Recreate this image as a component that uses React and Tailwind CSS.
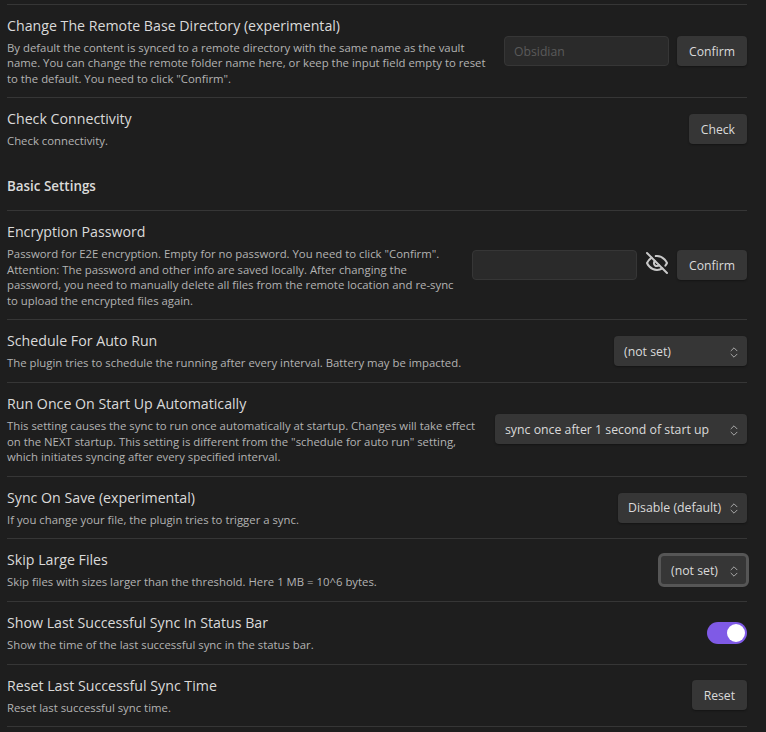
const FONT = "font-['Open_Sans','Noto_Sans',sans-serif]";

const Chevrons = () => (
    <svg width="8" height="11" viewBox="0 0 8 11" fill="none" stroke="#a8a8a8" strokeWidth="1" strokeLinecap="round" strokeLinejoin="round" className="shrink-0">
        <polyline points="1,3.8 4,0.8 7,3.8" />
        <polyline points="1,7.2 4,10.2 7,7.2" />
    </svg>
);

const EyeOff = () => (
    <svg width="24" height="24" viewBox="0 0 24 24" fill="none" stroke="#c8c8c8" strokeWidth="2" strokeLinecap="round" strokeLinejoin="round" className="shrink-0 mb-[4px]">
        <path d="M9.88 9.88a3 3 0 1 0 4.24 4.24" />
        <path d="M10.73 5.08A10.43 10.43 0 0 1 12 5c7 0 10 7 10 7a13.16 13.16 0 0 1-1.67 2.68" />
        <path d="M6.61 6.61A13.526 13.526 0 0 0 2 12s3 7 10 7a9.74 9.74 0 0 0 5.39-1.61" />
        <line x1="2" y1="2" x2="22" y2="22" />
    </svg>
);

const Button = ({ children }) => (
    <button type="button" className="h-[30px] px-[12px] pt-[2px] rounded-[4px] bg-[#363636] text-[#dadada] text-[12.2px] shadow-[0_1px_2px_rgba(0,0,0,0.35)] shrink-0">
        {children}
    </button>
);

const Input = ({ placeholder }) => (
    <input
        type="text"
        placeholder={placeholder}
        className="w-[165px] h-[30px] px-[9px] pt-[2px] rounded-[4px] bg-[#2a2a2a] border border-[#363636] text-[12.2px] placeholder:text-[#5a5a5a] outline-none shrink-0"
    />
);

const Select = ({ label, width, focused }) => (
    <div className={`${width} h-[30px] ${focused ? 'pl-[11px] outline-3 -outline-offset-1 outline-[#565656]' : 'pl-[10px]'} pr-[9px] pt-[2px] rounded-[4px] bg-[#363636] text-[#dadada] text-[12.3px] flex items-center justify-between shrink-0 shadow-[0_1px_2px_rgba(0,0,0,0.35)]`}>
        <span>{label}</span>
        <Chevrons />
    </div>
);

const Toggle = () => (
    <div className="w-[40px] h-[22px] rounded-full bg-[#7f5ae6] flex items-center justify-end pr-[2px] shrink-0">
        <div className="w-[18px] h-[18px] rounded-full bg-white" />
    </div>
);

const Row = ({ name, children, control }) => (
    <div className="flex items-center gap-[16px] border-t border-[#363636] py-[11px]">
        <div className="flex-1 min-w-0">
            <div className="text-[#dadada] text-[14.2px] leading-[19px] mb-[5px]">{name}</div>
            <div className="text-[#b3b3b3] text-[11.35px] leading-[15.6px]">{children}</div>
        </div>
        {control}
    </div>
);

export default function App() {
    return (
        <div className={`h-[732px] overflow-hidden bg-[#1e1e1e] pt-[3.6px] pl-[7px] pr-[19px] ${FONT}`}>
            <Row
                name="Change The Remote Base Directory (experimental)"
                control={
                    <div className="flex items-center gap-[8px]">
                        <Input placeholder="Obsidian" />
                        <Button>Confirm</Button>
                    </div>
                }
            >
                By default the content is synced to a remote directory with the same name as the vault name. You can change the remote folder name here, or keep the input field empty to reset to the default. You need to click "Confirm".
            </Row>
            <Row name="Check Connectivity" control={<Button>Check</Button>}>Check connectivity.</Row>

            <div className="h-[50px] pt-[2px] flex items-center text-[#dadada] text-[13.4px] font-semibold">Basic Settings</div>

            <Row
                name="Encryption Password"
                control={
                    <div className="flex items-center gap-[8px]">
                        <Input />
                        <EyeOff />
                        <Button>Confirm</Button>
                    </div>
                }
            >
                Password for E2E encryption. Empty for no password. You need to click "Confirm". Attention: The password and other info are saved locally. After changing the password, you need to manually delete all files from the remote location and re-sync to upload the encrypted files again.
            </Row>
            <Row name="Schedule For Auto Run" control={<Select label="(not set)" width="w-[133px]" />}>
                The plugin tries to schedule the running after every interval. Battery may be impacted.
            </Row>
            <Row name="Run Once On Start Up Automatically" control={<Select label="sync once after 1 second of start up" width="w-[252px]" />}>
                This setting causes the sync to run once automatically at startup. Changes will take effect on the NEXT startup. This setting is different from the "schedule for auto run" setting, which initiates syncing after every specified interval.
            </Row>
            <Row name="Sync On Save (experimental)" control={<Select label="Disable (default)" width="w-[129px]" />}>
                If you change your file, the plugin tries to trigger a sync.
            </Row>
            <Row name="Skip Large Files" control={<Select label="(not set)" width="w-[87px]" focused />}>
                Skip files with sizes larger than the threshold. Here 1 MB = 10^6 bytes.
            </Row>
            <Row name="Show Last Successful Sync In Status Bar" control={<Toggle />}>
                Show the time of the last successful sync in the status bar.
            </Row>
            <Row name="Reset Last Successful Sync Time" control={<Button>Reset</Button>}>
                Reset last successful sync time.
            </Row>
            <div className="border-t border-[#363636]" />
        </div>
    );
}
